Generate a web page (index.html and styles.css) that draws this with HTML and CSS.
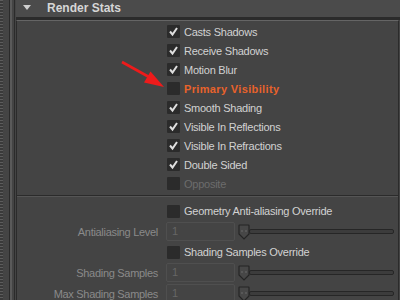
FILE: index.html
```html
<!DOCTYPE html>
<html>
<head>
<meta charset="utf-8">
<link rel="stylesheet" href="styles.css">
</head>
<body>
<div class="app">
  <div class="gutter"></div>
  <div class="main">
    <div class="header">
      <span class="tri"></span>
      <span class="title">Render Stats</span>
    </div>
    <div class="frame">
      <div class="checks">
        <div class="row"><span class="cb on"><svg viewBox="0 0 13 13" width="13" height="13"><polyline points="3,6.5 5.5,9.5 10,3" /></svg></span><span class="lbl">Casts Shadows</span></div>
        <div class="row"><span class="cb on"><svg viewBox="0 0 13 13" width="13" height="13"><polyline points="3,6.5 5.5,9.5 10,3" /></svg></span><span class="lbl">Receive Shadows</span></div>
        <div class="row"><span class="cb on"><svg viewBox="0 0 13 13" width="13" height="13"><polyline points="3,6.5 5.5,9.5 10,3" /></svg></span><span class="lbl">Motion Blur</span></div>
        <div class="row"><span class="cb"></span><span class="lbl hot">Primary Visibility</span></div>
        <div class="row"><span class="cb on"><svg viewBox="0 0 13 13" width="13" height="13"><polyline points="3,6.5 5.5,9.5 10,3" /></svg></span><span class="lbl">Smooth Shading</span></div>
        <div class="row"><span class="cb on"><svg viewBox="0 0 13 13" width="13" height="13"><polyline points="3,6.5 5.5,9.5 10,3" /></svg></span><span class="lbl">Visible In Reflections</span></div>
        <div class="row"><span class="cb on"><svg viewBox="0 0 13 13" width="13" height="13"><polyline points="3,6.5 5.5,9.5 10,3" /></svg></span><span class="lbl">Visible In Refractions</span></div>
        <div class="row"><span class="cb on"><svg viewBox="0 0 13 13" width="13" height="13"><polyline points="3,6.5 5.5,9.5 10,3" /></svg></span><span class="lbl">Double Sided</span></div>
        <div class="row"><span class="cb"></span><span class="lbl dim">Opposite</span></div>
      </div>
      <div class="sep"></div>
      <div class="grid">
        <div class="crow"><span class="cb"></span><span class="lbl">Geometry Anti-aliasing Override</span></div>
        <div class="frow">
          <span class="flabel">Antialiasing Level</span>
          <span class="field">1</span>
          <span class="slider"><svg class="knob" viewBox="0 0 12 16" width="12" height="16"><path d="M1.5,1 H10.5 Q11,1 11,1.5 V10 L6,15 L1,10 V1.5 Q1,1 1.5,1 Z"/><circle cx="4" cy="7" r="0.7"/><circle cx="8" cy="7" r="0.7"/></svg><span class="track"></span></span>
        </div>
        <div class="crow"><span class="cb"></span><span class="lbl">Shading Samples Override</span></div>
        <div class="frow">
          <span class="flabel">Shading Samples</span>
          <span class="field">1</span>
          <span class="slider"><svg class="knob" viewBox="0 0 12 16" width="12" height="16"><path d="M1.5,1 H10.5 Q11,1 11,1.5 V10 L6,15 L1,10 V1.5 Q1,1 1.5,1 Z"/><circle cx="4" cy="7" r="0.7"/><circle cx="8" cy="7" r="0.7"/></svg><span class="track"></span></span>
        </div>
        <div class="frow">
          <span class="flabel">Max Shading Samples</span>
          <span class="field">1</span>
          <span class="slider"><svg class="knob" viewBox="0 0 12 16" width="12" height="16"><path d="M1.5,1 H10.5 Q11,1 11,1.5 V10 L6,15 L1,10 V1.5 Q1,1 1.5,1 Z"/><circle cx="4" cy="7" r="0.7"/><circle cx="8" cy="7" r="0.7"/></svg><span class="track"></span></span>
        </div>
      </div>
    </div>
  </div>
  <svg class="arrow" width="400" height="300" viewBox="0 0 400 300">
    <line x1="122" y1="62" x2="149" y2="77" />
    <polygon points="164,87 144,82.5 150.5,71.5" />
  </svg>
</div>
</body>
</html>
```

FILE: styles.css
```css
html, body {
  margin: 0;
  padding: 0;
  background: #444444;
  width: 400px;
  height: 300px;
  overflow: hidden;
  font-family: "Liberation Sans", Arial, sans-serif;
  font-size: 11px;
  color: #d2d2d2;
}

.app {
  position: relative;
  display: flex;
  width: 400px;
  height: 300px;
  overflow: hidden;
}

.gutter {
  width: 16px;
  flex: none;
  background:
    linear-gradient(to right,
      transparent 0 3px,
      #444 3px 9px,
      #2a2a2a 9px 10px,
      #5a5a5a 10px 12px,
      #444 12px 14px,
      #2b2b2b 14px 15px,
      #444 15px 16px),
    repeating-linear-gradient(to bottom, #5c5c5c 0 1px, #3a3a3a 1px 3px);
}

.main {
  flex: 1;
  display: flex;
  flex-direction: column;
  min-height: 0;
}

.header {
  flex: none;
  height: 17px;
  background: #4b4b4b;
  border-bottom: 3px solid #2b2b2b;
  display: flex;
  align-items: center;
  padding-left: 7px;
}

.tri {
  width: 0;
  height: 0;
  border-left: 4.5px solid transparent;
  border-right: 4.5px solid transparent;
  border-top: 5px solid #cfcfcf;
  margin-top: -3px;
}

.title {
  font-weight: bold;
  font-size: 12px;
  color: #d6d6d6;
  margin-left: 16px;
  margin-top: -1px;
}

.frame {
  flex: none;
  border-top: 1px solid #656565;
  border-left: 1px solid #2b2b2b;
  border-right: 1px solid #2b2b2b;
  margin-right: 1px;
}

.checks {
  padding: 1px 0 0 150px;
}

.row, .crow {
  height: 19px;
  display: flex;
  align-items: center;
  gap: 4px;
}

.crow {
  height: 20px;
}

.cb {
  width: 13px;
  height: 13px;
  flex: none;
  background: #2b2b2b;
  border-radius: 1px;
  display: block;
}

.cb svg {
  display: block;
}

.cb polyline {
  fill: none;
  stroke: #dedede;
  stroke-width: 2;
}

.lbl {
  white-space: nowrap;
  letter-spacing: -0.25px;
}

.hot {
  color: #e8622b;
  font-weight: bold;
  letter-spacing: 0.35px;
}

.dim {
  color: #6c6c6c;
}

.sep {
  margin-top: 2px;
  height: 1px;
  background: #2b2b2b;
  border-bottom: 1px solid #555;
}

.grid {
  padding-top: 4px;
}

.grid .crow {
  padding-left: 150px;
}

.frow {
  height: 21px;
  display: grid;
  grid-template-columns: 141px 70px 1fr;
  column-gap: 8px;
  align-items: center;
}

.flabel {
  text-align: right;
  color: #8a8a8a;
  white-space: nowrap;
  letter-spacing: -0.3px;
}

.field {
  height: 17px;
  border: 1px solid #4f4f4f;
  border-radius: 2px;
  box-sizing: content-box;
  width: 62px;
  padding-left: 5px;
  line-height: 17px;
  color: #666;
}

.slider {
  display: flex;
  align-items: center;
  margin-left: -6px;
  margin-right: 4px;
}

.knob {
  display: block;
  flex: none;
}

.knob path {
  fill: #474747;
  stroke: #252525;
  stroke-width: 1.2;
}

.knob circle {
  fill: #777;
}

.track {
  flex: 1;
  height: 3px;
  background: #3c3c3c;
  border: 1px solid #262626;
  border-radius: 2px;
  margin-left: -1px;
}

.arrow {
  position: absolute;
  left: 0;
  top: 0;
  pointer-events: none;
}

.arrow line {
  stroke: #ee1b1b;
  stroke-width: 2.6;
}

.arrow polygon {
  fill: #ee1b1b;
}
```
